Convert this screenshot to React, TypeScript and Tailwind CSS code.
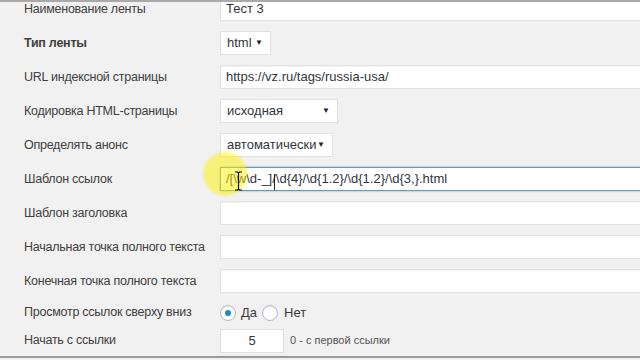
import React from 'react';

const font = { fontFamily: '"Liberation Sans", Arial, sans-serif' };

function Row({ label, bold, h = 'h-[34px]', children }: { label: string; bold?: boolean; h?: string; children: React.ReactNode }) {
  return (
    <div className={`flex items-center ${h}`}>
      <div className={`w-[220px] shrink-0 pl-[24px] whitespace-nowrap text-[12.5px] tracking-[-0.25px] text-[#404040] ${bold ? 'font-bold text-[#23282d]' : ''}`}>
        {label}
      </div>
      <div className="flex items-center flex-1 min-w-0">{children}</div>
    </div>
  );
}

function TextBox({ value, focused }: { value?: string; focused?: boolean }) {
  return (
    <div
      className={`h-[24px] w-[440px] shrink-0 flex items-center px-[5px] bg-white text-[13px] text-[#32373c] whitespace-nowrap ${
        focused
          ? 'border border-[#6f95b8] shadow-[0_0_2px_rgba(30,140,190,0.6)]'
          : 'border border-[#e2e2e2] shadow-[inset_0_1px_2px_rgba(0,0,0,0.05)]'
      }`}
    >
      {value}
    </div>
  );
}

function Select({ value, w }: { value: string; w: string }) {
  return (
    <div className={`h-[24px] ${w} flex items-center justify-between pl-[6px] pr-[7px] bg-white border border-[#e2e2e2] text-[13px] text-[#32373c]`}>
      <span>{value}</span>
      <span className="text-[8px] text-[#222]">▼</span>
    </div>
  );
}

function Radio({ checked }: { checked?: boolean }) {
  return (
    <span className="w-[16px] h-[16px] rounded-full border border-[#b4b9be] bg-white flex items-center justify-center shadow-[inset_0_1px_2px_rgba(0,0,0,0.1)]">
      {checked && <span className="w-[6px] h-[6px] rounded-full bg-[#1e8cbe]" />}
    </span>
  );
}

export default function App() {
  return (
    <div className="relative w-[640px] h-[360px] overflow-hidden bg-[#f1f1f1] border-t-2 border-[#a9a9a9]" style={font}>
      <div className="-mt-[10px]">
        <Row label="Наименование ленты">
          <TextBox value="Тест 3" />
        </Row>
        <Row label="Тип ленты" bold>
          <Select value="html" w="w-[51px]" />
        </Row>
        <Row label="URL индексной страницы">
          <TextBox value="https://vz.ru/tags/russia-usa/" />
        </Row>
        <Row label="Кодировка HTML-страницы">
          <Select value="исходная" w="w-[118px]" />
        </Row>
        <Row label="Определять анонс">
          <Select value="автоматически" w="w-[113px]" />
        </Row>
        <Row label="Шаблон ссылок">
          <TextBox value={'/[\\w\\d-_]/\\d{4}/\\d{1.2}/\\d{1.2}/\\d{3,}.html'} focused />
        </Row>
        <Row label="Шаблон заголовка">
          <TextBox />
        </Row>
        <Row label="Начальная точка полного текста">
          <TextBox />
        </Row>
        <Row label="Конечная точка полного текста">
          <TextBox />
        </Row>
        <Row label="Просмотр ссылок сверху вниз" h="h-[29px]">
          <div className="flex items-center text-[13px] text-[#3a3a3a]">
            <Radio checked />
            <span className="ml-[5px] mr-[5px]">Да</span>
            <Radio />
            <span className="ml-[6px]">Нет</span>
          </div>
        </Row>
        <Row label="Начать с ссылки" h="h-[27px]">
          <div className="h-[24px] w-[64px] flex items-center justify-center bg-white border border-[#e2e2e2] text-[13px] text-[#32373c]">
            5
          </div>
          <span className="ml-[6px] text-[11px] text-[#555]">0 - с первой ссылки</span>
        </Row>
      </div>
      <div className="absolute left-0 right-0 top-[354px] h-[2px] bg-[#9b9b9b]" />

      {/* cursor highlight */}
      <div className="absolute left-[203px] top-[150px] w-[44px] h-[44px] rounded-full bg-[#fff200]/50 blur-[1px] pointer-events-none" />
      {/* I-beam */}
      <svg className="absolute left-[234px] top-[169px] pointer-events-none" width="9" height="20" viewBox="0 0 9 20">
        <path d="M1 1h2.5l1 1 1-1H8M4.5 2v16M1 19h2.5l1-1 1 1H8" fill="none" stroke="#111" strokeWidth="1.2" />
      </svg>
      {/* text caret */}
      <div className="absolute left-[274px] top-[172px] w-[1px] h-[16px] bg-[#222]" />
    </div>
  );
}
